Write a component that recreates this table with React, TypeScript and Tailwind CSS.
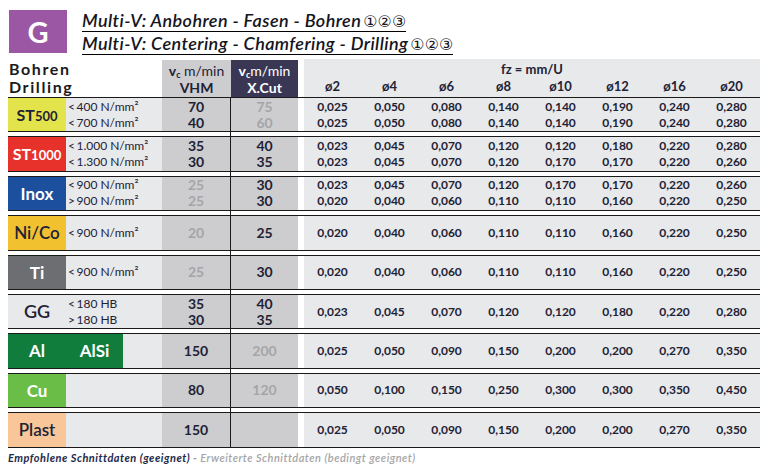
import React from "react";

type Row = {
  key: string;
  label: React.ReactNode;
  bg: string;
  wide?: boolean;
  desc: string[];
  vhm: string[];
  vhmDim?: boolean;
  xcut: string[];
  xcutDim?: boolean;
  fz: string[][];
};

const dark = "text-[#1e2235]";
const dim = "text-[#a5a5a7]";

const sizes = ["ø2", "ø4", "ø6", "ø8", "ø10", "ø12", "ø16", "ø20"];

const rows: Row[] = [
  {
    key: "st500",
    bg: "bg-[#e3e34c]",
    label: (
      <span className={`font-bold ${dark}`}>
        <span className="text-[16px]">ST</span>
        <span className="text-[13px]">500</span>
      </span>
    ),
    desc: ["<\u2009400 N/mm²", "<\u2009700 N/mm²"],
    vhm: ["70", "40"],
    xcut: ["75", "60"],
    xcutDim: true,
    fz: [
      ["0,025", "0,050", "0,080", "0,140", "0,140", "0,190", "0,240", "0,280"],
      ["0,025", "0,050", "0,080", "0,140", "0,140", "0,190", "0,240", "0,280"],
    ],
  },
  {
    key: "st1000",
    bg: "bg-[#e6322b]",
    label: (
      <span className="font-bold text-white">
        <span className="text-[16px]">ST</span>
        <span className="text-[13px]">1000</span>
      </span>
    ),
    desc: ["<\u20091.000 N/mm²", "<\u20091.300 N/mm²"],
    vhm: ["35", "30"],
    xcut: ["40", "35"],
    fz: [
      ["0,023", "0,045", "0,070", "0,120", "0,120", "0,180", "0,220", "0,280"],
      ["0,023", "0,045", "0,070", "0,120", "0,170", "0,170", "0,220", "0,260"],
    ],
  },
  {
    key: "inox",
    bg: "bg-[#1c4f9d]",
    label: <span className="font-bold text-white text-[17px]">Inox</span>,
    desc: ["<\u2009900 N/mm²", ">\u2009900 N/mm²"],
    vhm: ["25", "25"],
    vhmDim: true,
    xcut: ["30", "30"],
    fz: [
      ["0,023", "0,045", "0,070", "0,120", "0,170", "0,170", "0,220", "0,260"],
      ["0,020", "0,040", "0,060", "0,110", "0,110", "0,160", "0,220", "0,250"],
    ],
  },
  {
    key: "nico",
    bg: "bg-[#f2c12f]",
    label: <span className={`font-semibold text-[17px] ${dark}`}>Ni/Co</span>,
    desc: ["<\u2009900 N/mm²"],
    vhm: ["20"],
    vhmDim: true,
    xcut: ["25"],
    fz: [["0,020", "0,040", "0,060", "0,110", "0,110", "0,160", "0,220", "0,250"]],
  },
  {
    key: "ti",
    bg: "bg-[#6d6e71]",
    label: <span className="font-bold text-white text-[17px]">Ti</span>,
    desc: ["<\u2009900 N/mm²"],
    vhm: ["25"],
    vhmDim: true,
    xcut: ["30"],
    fz: [["0,020", "0,040", "0,060", "0,110", "0,110", "0,160", "0,220", "0,250"]],
  },
  {
    key: "gg",
    bg: "bg-[#e8e9eb]",
    label: <span className={`font-semibold text-[18px] ${dark}`}>GG</span>,
    desc: ["<\u2009180 HB", ">\u2009180 HB"],
    vhm: ["35", "30"],
    xcut: ["40", "35"],
    fz: [["0,023", "0,045", "0,070", "0,120", "0,120", "0,180", "0,220", "0,280"]],
  },
  {
    key: "al",
    bg: "bg-[#117d3d]",
    wide: true,
    label: null,
    desc: [],
    vhm: ["150"],
    xcut: ["200"],
    xcutDim: true,
    fz: [["0,025", "0,050", "0,090", "0,150", "0,200", "0,200", "0,270", "0,350"]],
  },
  {
    key: "cu",
    bg: "bg-[#6abd46]",
    label: <span className="font-bold text-white text-[17px]">Cu</span>,
    desc: [],
    vhm: ["80"],
    xcut: ["120"],
    xcutDim: true,
    fz: [["0,050", "0,100", "0,150", "0,250", "0,300", "0,300", "0,350", "0,450"]],
  },
  {
    key: "plast",
    bg: "bg-[#f8c699]",
    label: <span className={`font-semibold text-[17px] ${dark}`}>Plast</span>,
    desc: [],
    vhm: ["150"],
    xcut: [],
    fz: [["0,025", "0,050", "0,090", "0,150", "0,200", "0,200", "0,270", "0,350"]],
  },
];

function DataRow({ r }: { r: Row }) {
  return (
    <div className="flex w-[752px] h-[35.4px] border-y border-[#1a1a1a]">
      {r.wide ? (
        <>
          <div className={`w-[115px] ${r.bg} flex items-center text-white font-bold text-[17px]`}>
            <span className="w-[58px] text-center">Al</span>
            <span className="flex-1 text-center">AlSi</span>
          </div>
          <div className="w-[39px] bg-[#e8e9eb]" />
        </>
      ) : (
        <>
          <div className={`w-[58px] ${r.bg} flex items-center justify-center`}>{r.label}</div>
          <div className={`w-[96px] bg-[#e8e9eb] flex flex-col justify-center pl-[2px] text-[12px] leading-[16px] ${dark}`}>
            {r.desc.map((d) => (
              <span key={d}>{d}</span>
            ))}
          </div>
        </>
      )}
      <div
        className={`w-[69px] bg-[#cdcdcf] border-r border-[#1a1a1a] flex flex-col justify-center items-center text-[14px] font-bold leading-[16px] ${
          r.vhmDim ? dim : dark
        }`}
      >
        {r.vhm.map((v, i) => (
          <span key={i}>{v}</span>
        ))}
      </div>
      <div
        className={`w-[67px] bg-[#cdcdcf] flex flex-col justify-center items-center text-[14px] font-bold leading-[16px] ${
          r.xcutDim ? dim : dark
        }`}
      >
        {r.xcut.map((v, i) => (
          <span key={i}>{v}</span>
        ))}
      </div>
      <div className="w-[6px]" />
      <div className={`flex-1 bg-[#e8e9eb] flex flex-col justify-center text-[12px] font-bold leading-[16px] ${dark}`}>
        {r.fz.map((line, i) => (
          <div key={i} className="grid grid-cols-8 text-center">
            {line.map((v, j) => (
              <span key={j}>{v}</span>
            ))}
          </div>
        ))}
      </div>
    </div>
  );
}

function Gap() {
  return (
    <div className="flex h-[4px]">
      <div className="w-[222px]" />
      <div className="w-px bg-[#1a1a1a]" />
    </div>
  );
}

export default function App() {
  return (
    <div className="w-[773px] h-[474px] bg-white overflow-hidden font-[family-name:Lato,sans-serif] text-[#1e2235]">
      {/* Title */}
      <div className="flex items-start pl-[9px] pt-[10px]">
        <div className="w-[58px] h-[43px] bg-[#9b57a3] flex items-center justify-center text-white text-[29px] font-bold">
          G
        </div>
        <div className="ml-[15px] pt-[1px] flex flex-col items-start text-[#15151d]">
          <div className="border-b-[1.5px] border-black italic font-semibold text-[18px] leading-[18px] tracking-[0.4px]">
            Multi-V: Anbohren - Fasen - Bohren
            <span className="ml-[2px] not-italic font-normal tracking-normal text-[16px] font-[family-name:'DejaVu_Sans',sans-serif]">
              ①②③
            </span>
          </div>
          <div className="mt-[2px] border-b-[1.5px] border-black italic font-semibold text-[18px] leading-[18px] tracking-[0.4px]">
            Multi-V: Centering - Chamfering - Drilling
            <span className="ml-[2px] not-italic font-normal tracking-normal text-[16px] font-[family-name:'DejaVu_Sans',sans-serif]">
              ①②③
            </span>
          </div>
        </div>
      </div>

      {/* Table */}
      <div className="pl-[8px] mt-[4px]">
        <div className="flex w-[752px] h-[38px]">
          <div className="w-[154px] pl-[1px] flex flex-col justify-center text-[16px] font-bold leading-[18px] tracking-[1.6px] text-[#1a1a1a]">
            <span>Bohren</span>
            <span>Drilling</span>
          </div>
          <div className="w-[69px] mt-[1px] bg-[#cdcdcf] flex flex-col justify-center items-center text-[14px] leading-[17px]">
            <span>
              <b>
                v<sub className="text-[9px]">c</sub>
              </b>{" "}
              m/min
            </span>
            <b>VHM</b>
          </div>
          <div className="w-[67px] mt-[1px] bg-[#3a3754] flex flex-col justify-center items-center text-white text-[14px] leading-[17px]">
            <span>
              <b>
                v<sub className="text-[9px]">c</sub>
              </b>
              m/min
            </span>
            <b>X.Cut</b>
          </div>
          <div className="w-[6px]" />
          <div className="flex-1 bg-[#e8e9eb] flex flex-col justify-center text-[13px] font-bold leading-[17px]">
            <div className="text-center">fz = mm/U</div>
            <div className="grid grid-cols-8 text-center">
              {sizes.map((s) => (
                <span key={s}>{s}</span>
              ))}
            </div>
          </div>
        </div>

        {rows.map((r, i) => (
          <React.Fragment key={r.key}>
            {i > 0 && <Gap />}
            <DataRow r={r} />
          </React.Fragment>
        ))}

        <div className="mt-[3px] text-[11px] italic font-bold leading-[14px] tracking-[0.5px]">
          <span className="text-[#1e2a4a]">Empfohlene Schnittdaten (geeignet)</span>
          <span className="text-[#9a9a9c]"> - </span>
          <span className="text-[#a5a5a7] font-semibold">Erweiterte Schnittdaten (bedingt geeignet)</span>
        </div>
      </div>
    </div>
  );
}
